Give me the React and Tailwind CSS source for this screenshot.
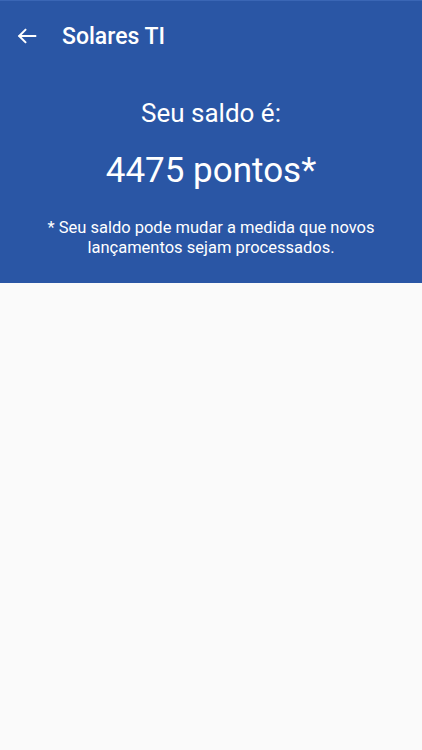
import React from "react";

export default function App() {
  return (
    <div className="min-h-[750px] w-full bg-[#fafafa]" style={{ fontFamily: "Roboto, 'Noto Sans', sans-serif" }}>
      <div className="bg-[#2a56a5] text-white border-t border-[#3a66b5]">
        <div className="flex h-[71px] items-center">
          <div className="flex w-[62px] items-center pl-[16px] -mt-[2px]">
            <svg width="22" height="22" viewBox="0 0 24 24" fill="none" stroke="white" strokeWidth="2.2" strokeLinecap="square">
              <path d="M21 12H4" />
              <path d="M11 4.5L3.5 12L11 19.5" strokeLinecap="butt" />
            </svg>
          </div>
          <div className="text-[23px] font-medium leading-none">Solares TI</div>
        </div>
        <div className="flex flex-col items-center pb-[25px] text-center">
          <div className="mt-[26px] text-[26px] leading-[30px]">Seu saldo é:</div>
          <div className="mt-[22px] text-[35px] leading-[42px]">4475 pontos*</div>
          <div className="mt-[26px] text-[16.5px] leading-[20px] px-4">
            * Seu saldo pode mudar a medida que novos
            <br />
            lançamentos sejam processados.
          </div>
        </div>
      </div>
    </div>
  );
}
